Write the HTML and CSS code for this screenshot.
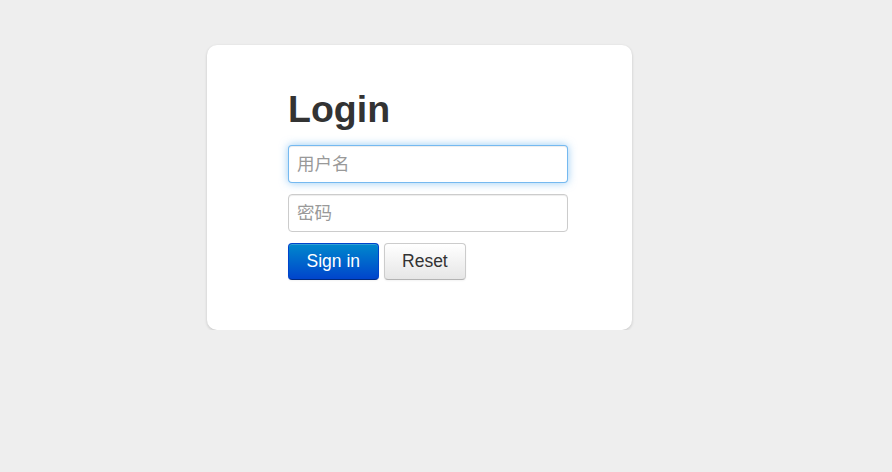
FILE: index.html
```html
<!DOCTYPE html>
<html lang="zh-CN">
<head>
  <meta charset="UTF-8" />
  <meta name="viewport" content="width=device-width, initial-scale=1" />
  <title>Login</title>
  <link rel="stylesheet" href="styles.css">
</head>
<body>
  <div class="card">
    <form class="login-form">
      <h1>Login</h1>
      <input class="field focused" type="text" placeholder="用户名" autofocus />
      <input class="field" type="password" placeholder="密码" />
      <div class="actions">
        <button type="submit" class="btn btn-primary">Sign in</button>
        <button type="reset" class="btn">Reset</button>
      </div>
    </form>
  </div>
</body>
</html>
```

FILE: styles.css
```css
body { margin: 0; background: #eeeeee; font-family: "Liberation Sans", Arial, "Noto Sans CJK SC", sans-serif; color: #333; }
.card { box-sizing: border-box; width: 425px; height: 285px; margin: 45px 0 0 207px; padding: 34px 0 0 81px; background: #fff; border-radius: 10px; box-shadow: 0 1px 3px rgba(0,0,0,0.18); }
.login-form { display: flex; flex-direction: column; align-items: flex-start; }
h1 { margin: 10px 0 16px; font-size: 37.5px; line-height: 40px; font-weight: bold; color: #333; }
.field { box-sizing: border-box; width: 280px; height: 38px; margin: 0 0 11px; padding: 0 8px; font-size: 17.5px; font-family: "Liberation Sans", Arial, "Noto Sans CJK SC", sans-serif; color: #555; border: 1px solid #ccc; border-radius: 4px; outline: none; box-shadow: inset 0 1px 1px rgba(0,0,0,0.075); }
.field::placeholder { color: #999; }
.field.focused, .field:focus { border-color: rgba(82,168,236,0.8); box-shadow: inset 0 1px 1px rgba(0,0,0,0.075), 0 0 8px rgba(82,168,236,0.6); }
.actions { display: flex; gap: 5px; }
.btn { box-sizing: border-box; height: 37px; padding: 0 17.5px; font-size: 17.5px; font-family: "Liberation Sans", Arial, sans-serif; color: #333; background: linear-gradient(#ffffff, #e6e6e6); border: 1px solid #ccc; border-bottom-color: #b3b3b3; border-radius: 4px; box-shadow: inset 0 1px 0 rgba(255,255,255,0.2), 0 1px 2px rgba(0,0,0,0.05); cursor: pointer; }
.btn-primary { color: #fff; background: linear-gradient(#0088cc, #0044cc); border-color: #0044cc #0044cc #002a80; }
```
